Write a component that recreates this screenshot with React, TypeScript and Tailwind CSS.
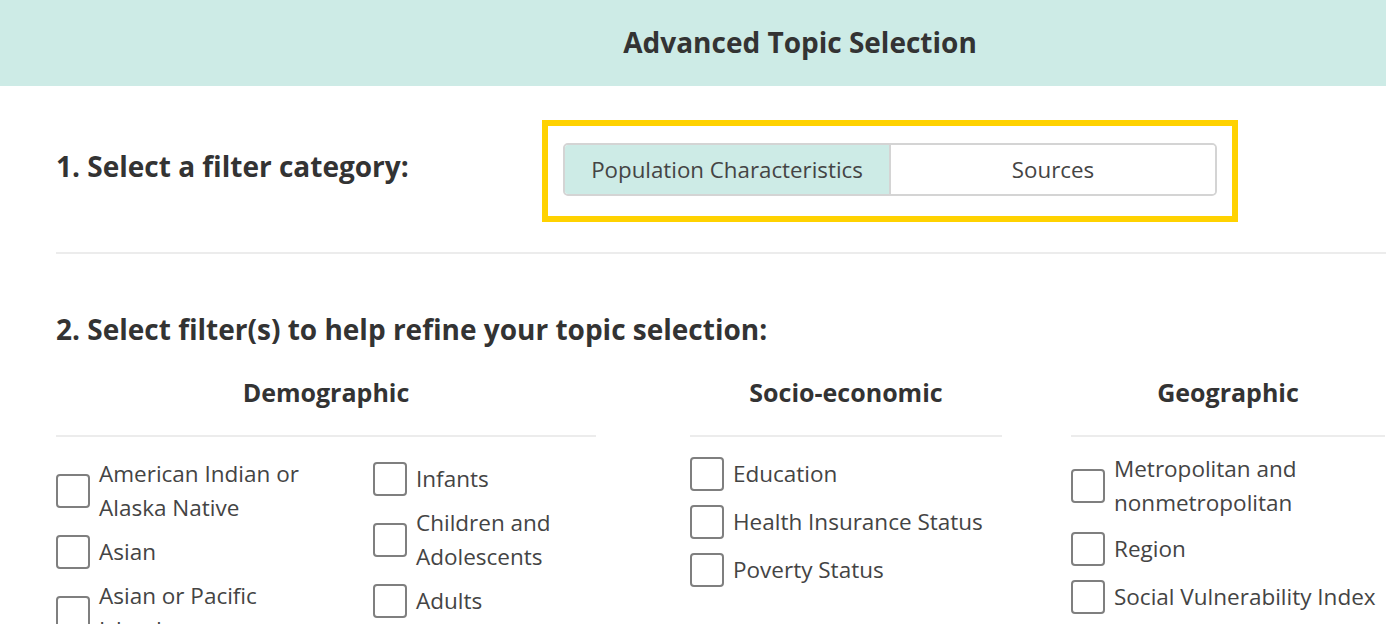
import React, { useState } from 'react';

type Item = { id: string; label: string };

const demographicLeft: Item[] = [
  { id: 'aian', label: 'American Indian or Alaska Native' },
  { id: 'asian', label: 'Asian' },
  { id: 'api', label: 'Asian or Pacific Islander' },
];

const demographicRight: Item[] = [
  { id: 'infants', label: 'Infants' },
  { id: 'children', label: 'Children and Adolescents' },
  { id: 'adults', label: 'Adults' },
];

const socio: Item[] = [
  { id: 'education', label: 'Education' },
  { id: 'insurance', label: 'Health Insurance Status' },
  { id: 'poverty', label: 'Poverty Status' },
];

const geo: Item[] = [
  { id: 'metro', label: 'Metropolitan and nonmetropolitan' },
  { id: 'region', label: 'Region' },
  { id: 'svi', label: 'Social Vulnerability Index' },
];

function CheckItem({ item, checked, onToggle }: { item: Item; checked: boolean; onToggle: () => void }) {
  return (
    <label className="flex items-center gap-[9px] cursor-pointer">
      <span
        onClick={onToggle}
        className={
          'shrink-0 w-[34px] h-[34px] my-[2px] rounded-[4px] border-2 border-[#7f7f7f] flex items-center justify-center ' +
          (checked ? 'bg-[#cdebe6]' : 'bg-white')
        }
      >
        {checked && (
          <svg viewBox="0 0 24 24" width="22" height="22" fill="none" stroke="#333" strokeWidth="3" strokeLinecap="round" strokeLinejoin="round">
            <polyline points="5 12 10 17 19 7"></polyline>
          </svg>
        )}
      </span>
      <span className="text-[22.5px] leading-[34px] text-[#444]">{item.label}</span>
    </label>
  );
}

function ItemList({ items, selected, toggle, className }: { items: Item[]; selected: Record<string, boolean>; toggle: (id: string) => void; className?: string }) {
  return (
    <div className={'flex flex-col ' + (className ?? '')}>
      {items.map((it) => (
        <CheckItem key={it.id} item={it} checked={!!selected[it.id]} onToggle={() => toggle(it.id)} />
      ))}
    </div>
  );
}

function ColumnHeading({ children }: { children: React.ReactNode }) {
  return (
    <div className="h-[68px] border-b-2 border-[#ececec] flex items-start justify-center pt-[6px]">
      <h3 className="text-[25px] font-bold text-[#333] leading-[34px]">{children}</h3>
    </div>
  );
}

export default function App() {
  const [category, setCategory] = useState<'population' | 'sources'>('population');
  const [selected, setSelected] = useState<Record<string, boolean>>({});

  const toggle = (id: string) => setSelected((s) => ({ ...s, [id]: !s[id] }));

  return (
    <div className="w-full h-[624px] overflow-hidden bg-white font-['Open_Sans',sans-serif] text-[#333]">
      {/* Header */}
      <div className="h-[86px] bg-[#cdebe6] flex items-center justify-center pl-[214px]">
        <h1 className="text-[28px] font-bold text-[#333] -mt-[2px]">Advanced Topic Selection</h1>
      </div>

      <div className="pl-[56px]">
        {/* Step 1 */}
        <div className="flex items-center pt-[34px] pb-[30px] border-b-2 border-[#ececec]">
          <h2 className="w-[486px] text-[28px] font-bold text-[#333] -mt-[10px]">1. Select a filter category:</h2>
          <div className="w-[696px] border-[6px] border-[#ffd200] px-[15px] pt-[17px] pb-[20px]">
            <div className="flex h-[53px] rounded-[5px] border-2 border-[#d4d4d4] overflow-hidden">
              <button
                onClick={() => setCategory('population')}
                className={
                  'flex-1 text-[22.3px] text-[#444] border-r-2 border-[#d4d4d4] ' +
                  (category === 'population' ? 'bg-[#cdebe6]' : 'bg-white')
                }
              >
                Population Characteristics
              </button>
              <button
                onClick={() => setCategory('sources')}
                className={'flex-1 text-[22.3px] text-[#444] ' + (category === 'sources' ? 'bg-[#cdebe6]' : 'bg-white')}
              >
                Sources
              </button>
            </div>
          </div>
        </div>

        {/* Step 2 */}
        <h2 className="mt-[56px] text-[28px] font-bold text-[#333] leading-[38px]">
          2. Select filter(s) to help refine your topic selection:
        </h2>

        <div className="flex mt-[21px]">
          <div className="w-[540px]">
            <ColumnHeading>Demographic</ColumnHeading>
            <div className="grid grid-cols-[317px_1fr]">
              <ItemList items={demographicLeft} selected={selected} toggle={toggle} className="pt-[20px] gap-[8px] pr-[50px]" />
              <ItemList items={demographicRight} selected={selected} toggle={toggle} className="pt-[23px] gap-[8px]" />
            </div>
          </div>

          <div className="w-[312px] ml-[94px]">
            <ColumnHeading>Socio-economic</ColumnHeading>
            <ItemList items={socio} selected={selected} toggle={toggle} className="pt-[18px] gap-[10px]" />
          </div>

          <div className="w-[314px] ml-[69px] shrink-0">
            <ColumnHeading>Geographic</ColumnHeading>
            <ItemList items={geo} selected={selected} toggle={toggle} className="pt-[15px] gap-[10px]" />
          </div>
        </div>
      </div>
    </div>
  );
}
